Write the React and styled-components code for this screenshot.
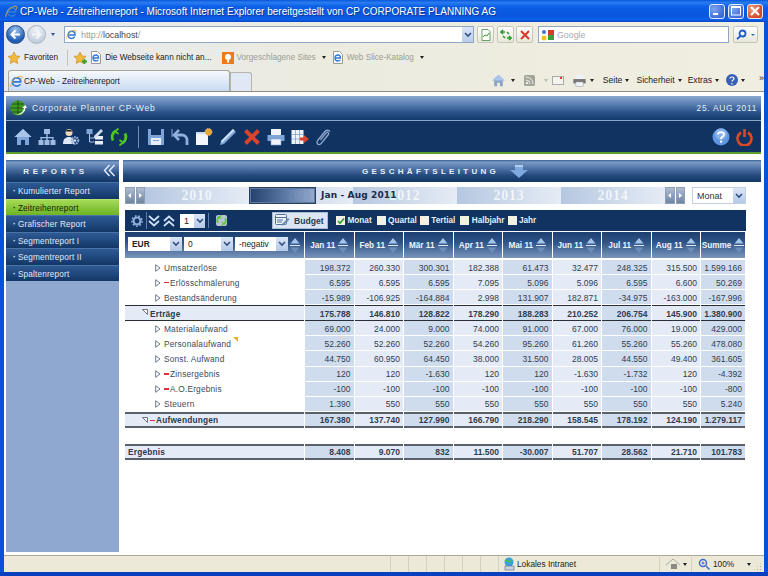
import React from "react";
import styled, { createGlobalStyle } from "styled-components";

const Global = createGlobalStyle`
  html, body { margin: 0; padding: 0; overflow: hidden; background: #fff; }
  * { box-sizing: border-box; }
  body { font-family: "Liberation Sans", Arial, sans-serif; }
`;

const Win = styled.div`
  width: 768px; height: 576px; display: flex; flex-direction: column; overflow: hidden;
  background: #0a50d8;
`;
const TitleBar = styled.div`
  height: 22px; flex: none; display: flex; align-items: center; padding: 0 5px 0 5px; gap: 2px;
  background: linear-gradient(180deg, #0a58dc 0%, #2a7cf0 12%, #0b5fe6 30%, #0a56dc 70%, #0c60ea 88%, #0648c8 100%);
`;
const TitleText = styled.div`
  flex: 1; color: #fff; font-size: 10px; white-space: nowrap; text-shadow: 1px 1px 0 #0a3a9a; letter-spacing: 0.02px;
`;
const WinBtn = styled.div`
  width: 16px; height: 15px; border: 1px solid #e4ecfb; border-radius: 3px; margin-left: 1px;
  display: flex; align-items: center; justify-content: center;
  background: ${p => p.$close ? "radial-gradient(circle at 30% 30%, #f0a080, #d2492a 70%)" : "radial-gradient(circle at 30% 30%, #7ea5f0, #3a68d8 75%)"};
`;
const Chrome = styled.div`
  flex: none; margin: 0 4px; background: linear-gradient(90deg, #e6ebf2 0%, #ecebe0 40%, #f0eee0 100%);
  border-bottom: 1px solid #8f8d80;
`;
const AddressRow = styled.div`
  height: 25px; display: flex; align-items: center; padding-left: 2px;
`;
const NavBtn = styled.div`
  width: 19px; height: 19px; border-radius: 50%; display: flex; align-items: center; justify-content: center;
  margin-right: 2px; border: 1px solid ${p => p.$off ? "#a9b6c6" : "#1c4c94"};
  background: ${p => p.$off ? "radial-gradient(circle at 50% 25%, #eef2f7, #b6c3d4)" : "radial-gradient(circle at 50% 25%, #9fc4ee, #1f5cb0 70%)"};
`;
const Caret = styled.span`
  display: inline-block; flex: none; width: 0; height: 0; border-left: ${p => p.$s || 2.5}px solid transparent; border-right: ${p => p.$s || 2.5}px solid transparent;
  border-top: ${p => p.$s || 3}px solid ${p => p.$c || "#222"}; margin-left: ${p => p.$ml ?? 3}px;
`;
const AddressField = styled.div`
  width: 410px; height: 17px; margin-left: 9px; background: #fff; border: 1px solid #8fa7c2; display: flex; align-items: center;
  padding-left: 1px; gap: 4px; font-size: 8.8px; color: #9a9a9a;
  b { font-weight: 400; color: #444; }
`;
const ComboBtn = styled.div`
  margin-left: auto; width: 11px; height: 15px; background: linear-gradient(#dbe6f6, #b9cdea); display: flex; align-items: center; justify-content: center;
`;
const SmallBtn = styled.div`
  width: 17px; height: 17px; margin-left: ${p => p.$ml}px; border: 1px solid #c6c6bc; border-radius: 2px; background: linear-gradient(#fff, #e8e7da);
  display: flex; align-items: center; justify-content: center;
`;
const SearchField = styled(AddressField)`
  width: 191px; margin-left: 5px; gap: 2px; color: #aaa; padding-left: 2px;
`;
const SearchBtn = styled.div`
  width: 25px; height: 17px; margin-left: 4px; border: 1px solid #c6c6bc; border-radius: 2px; background: linear-gradient(#fff, #e6e6da); display: flex; align-items: center; padding-left: 2px;
`;
const FavRow = styled.div`
  height: 21px; display: flex; align-items: center; font-size: 8.2px; color: #222; padding-left: 3px; white-space: nowrap;
`;
const FavItem = styled.div`
  display: flex; align-items: center; gap: 3px; margin-left: ${p => p.$ml || 0}px; color: ${p => p.$dim ? "#9c9c92" : "#222"};
`;
const VSep = styled.div`
  width: 1px; height: ${p => p.$h || 16}px; background: ${p => p.$c || "#c4c2b2"}; margin-left: ${p => p.$ml || 0}px; flex: none;
`;
const TabRow = styled.div`
  height: 23px; display: flex; align-items: flex-end; font-size: 8.2px; color: #222; padding-left: 4px; white-space: nowrap;
`;
const Tab = styled.div`
  width: 222px; height: 21px; border: 1px solid #a7a79c; border-bottom: none; border-radius: 3px 3px 0 0; display: flex; align-items: center; gap: 1px; padding-left: 1px;
  background: linear-gradient(#f6f9fd, #c9daf2);
`;
const NewTab = styled.div`
  width: 22px; height: 19px; border: 1px solid #b6b6ac; border-bottom: none; border-radius: 0 3px 0 0; background: #dfe8f4;
`;
const CmdBar = styled.div`
  display: flex; align-items: center; align-self: center; margin-left: auto; padding-top: 1px;
`;
const CmdText = styled.span`
  margin-left: ${p => p.$ml}px; display: inline-flex; align-items: center; font-size: 8.6px; color: #222;
`;
const CmdIcon = styled.span`
  display: inline-flex; margin-left: ${p => p.$ml}px;
`;
const More = styled.span`
  font-size: 9px; margin-left: 14px; align-self: flex-start; line-height: 8px;
`;
const Page = styled.div`
  flex: 1; margin: 0 4px; background: #fff; padding: 4px 3px 3px 2px; display: flex; flex-direction: column; min-height: 0;
`;
const gradient = "linear-gradient(180deg, #8ba8d0 0%, #5f83b4 30%, #2a5288 70%, #133a6c 100%)";
const AppHeader = styled.div`
  height: 25px; flex: none; display: flex; align-items: center; padding: 0 4px 0 4px; background: ${gradient};
  color: #e6edf7; font-size: 8px; border-bottom: 1px solid #8aa6cc;
`;
const AppTitle = styled.span`
  margin-left: 5px; letter-spacing: 0.78px; font-size: 8.6px; flex: 1;
`;
const AppDate = styled.span`
  letter-spacing: 0.7px; font-size: 8.4px;
`;
const MainToolbar = styled.div`
  height: 33px; flex: none; display: flex; align-items: center; gap: 6px; padding: 0 8px; background: #103362; border-bottom: 2px solid #5aa02a;
`;
const ToolSep = styled.div`
  width: 1px; height: 22px; background: #6f8fb8; margin: 0 2px 0 4px;
`;
const Spacer = styled.div`flex: 1;`;
const Body = styled.div`
  flex: 1; display: flex; gap: 4px; margin-top: 6px; min-height: 0;
`;
const Sidebar = styled.div`
  width: 113px; flex: none; background: #8ea8cf; display: flex; flex-direction: column;
`;
const PanelHead = styled.div`
  height: 22px; flex: none; display: flex; align-items: center; justify-content: center; position: relative; color: #e8eef8; font-weight: 700;
  font-size: 8px; letter-spacing: 3.7px; padding-right: 14px;
  background: linear-gradient(180deg, #3c6398 0%, #7c9ac4 10%, #5a7fb0 30%, #24497c 70%, #123766 100%);
`;
const Collapse = styled.div`
  position: absolute; right: 3px; top: 4px; display: flex;
`;
const SideItem = styled.div`
  height: 16.5px; display: flex; align-items: center; padding: 2px 0 0 7px; font-size: 8.2px; letter-spacing: 0.18px; white-space: nowrap;
  color: ${p => p.$on ? "#10240a" : "#e2eaf6"};
  border-top: 1px solid ${p => p.$on ? "#b6e070" : "#4b73a8"};
  background: ${p => p.$on ? "linear-gradient(180deg, #a6da56, #6db424)" : "linear-gradient(180deg, #2e5a94, #123766)"};
  &::before { content: "·"; margin-right: 2px; font-weight: 700; }
`;
const Main = styled.div`
  flex: 1; min-width: 0; display: flex; flex-direction: column;
`;
const MainHead = styled(PanelHead)`
  letter-spacing: 3.3px; gap: 11px; padding: 0 0 0 6px;
`;
const Content = styled.div`
  flex: 1; padding: 5px 15px 0 2px; background: #fff;
`;
const Timeline = styled.div`
  display: flex; height: 17px; position: relative; width: 621px;
`;
const TimeBtns = styled.div`
  width: 20px; flex: none; display: flex; gap: 1px;
`;
const TimeBtn = styled.div`
  flex: 1; background: linear-gradient(#aebcd0, #71859f); border: 1px solid #8d9fb8; display: flex; align-items: center; justify-content: center;
`;
const Year = styled.div`
  width: 104px; flex: none; display: flex; align-items: center; justify-content: center; font-family: "Liberation Serif", serif; font-weight: 700; font-size: 14px; letter-spacing: 0.8px;
  color: rgba(255,255,255,0.72); background: linear-gradient(90deg, #b5c7e0, #e6ecf5);
`;
const Range = styled.div`
  position: absolute; left: 124px; top: 0; width: 67px; height: 17px; border: 1px solid #2a3f5c;
  background: linear-gradient(90deg, #25416d, rgba(80,112,160,0.85) 60%, rgba(130,155,195,0.8));
  box-shadow: inset 0 0 0 1px #5d7aa6;
`;
const RangeLabel = styled.div`
  position: absolute; left: 196px; top: 1px; font-family: "DejaVu Sans", sans-serif; font-weight: 700; font-size: 9px; color: #1c2c4a; line-height: 15px; white-space: nowrap; letter-spacing: 0.13px;
`;
const TopSelect = styled.div`
  position: absolute; left: 567px; top: 0; width: 54px; height: 17px; background: #fff; border: 1px solid #c3d0e4; display: flex; align-items: center; padding-left: 4px; font-size: 9px; color: #333;
`;
const SelBtn = styled.div`
  margin-left: auto; width: ${p => p.$w || 12}px; height: 100%; background: linear-gradient(#dbe6f6, #b4c9e8); display: flex; align-items: center; justify-content: center;
`;
const Chev = () => <svg width="8" height="6" viewBox="0 0 8 6"><path d="M1 1l3 3 3-3" fill="none" stroke="#33507e" strokeWidth="1.6" /></svg>;
const GridBar = styled.div`
  margin-top: 6px; height: 21px; background: #103362; display: flex; align-items: center; position: relative; font-size: 8.2px; color: #e6edf7; font-weight: 700; width: 621px;
`;
const BarIcon = styled.span`
  display: flex; margin-left: ${p => p.$ml}px; gap: ${p => p.$gap || 0}px;
`;
const BarBadge = styled(BarIcon)`
  background: #b8c4d4; border-radius: 2px;
`;
const NumSelect = styled.div`
  width: 25px; height: 14px; background: #fff; display: flex; align-items: center; padding-left: 4px; font-size: 9px; color: #222; margin-left: ${p => p.$ml || 0}px; font-weight: 400;
`;
const BudgetBtn = styled.div`
  width: 56px; height: 17px; margin-left: ${p => p.$ml}px; background: #dbe5f3; border: 1px solid #a8bbd6; display: flex; align-items: center; gap: 4px; padding-left: 2px; color: #2a3a52; font-size: 8.6px;
`;
const Check = styled.label`
  display: flex; align-items: center; gap: 2.5px; margin-left: ${p => p.$ml || 0}px;
`;
const CheckBox = styled.span`
  width: 9px; height: 9px; background: #f2f1e6; display: flex; align-items: center; justify-content: center; flex: none;
`;
const Table = styled.div`width: 621px;`;
const Row = styled.div`
  display: grid; grid-template-columns: 179px repeat(8, 48.5px) 44px; column-gap: 1px;
  height: ${p => p.$h || 15.1}px; margin-top: ${p => p.$mt || 0}px; margin-bottom: ${p => p.$mb || 0}px;
`;
const HeadLeft = styled.div`
  background: linear-gradient(180deg, #1c3f70 0%, #2f5488 40%, #7a95ba 100%); display: flex; align-items: flex-start; padding: 5px 0 0 3px; gap: 2px;
`;
const HeadCell = styled.div`
  display: flex; align-items: center; justify-content: center; gap: 3px; padding: 0 1px; color: #eef3fa; font-weight: 700; font-size: 8.2px; white-space: nowrap;
  background: linear-gradient(180deg, #1c3f70 0%, #2f5488 40%, #7a95ba 100%);
`;
const HSelect = styled.div`
  width: ${p => p.$w}px; height: 14px; background: #fff; display: flex; align-items: center; padding-left: 4px; font-size: 8.4px; color: #222; font-weight: ${p => p.$b ? 700 : 400};
`;
const Label = styled.div`
  display: flex; align-items: center; font-size: 8.3px; letter-spacing: 0.2px; color: ${p => p.$bold ? "#2c3a4c" : "#3c495c"}; font-weight: ${p => p.$bold ? 700 : 400};
  padding: 1px 0 0 ${p => p.$indent}px; white-space: nowrap; position: relative; margin-bottom: 1px;
  background: ${p => p.$bold ? "#e4ebf6" : "transparent"};
  ${p => p.$line ? `border-top: ${p.$line}; border-bottom: ${p.$line}; margin-bottom: 0;` : ""}
`;
const Cell = styled.div`
  display: flex; align-items: center; justify-content: flex-end; padding: 1px 3px 0 0; font-size: 8.5px; color: #323d4c; font-weight: ${p => p.$bold ? 700 : 400};
  background: ${p => p.$dark ? "#cfdcee" : "#e4ebf6"}; margin-bottom: 1px; white-space: nowrap;
  ${p => p.$line ? `border-top: ${p.$line}; border-bottom: ${p.$line}; margin-bottom: 0;` : ""}
`;
const Dash = styled.span`
  display: inline-block; width: 5px; height: 1.5px; background: #e0303a; margin-right: 1px; flex: none;
`;
const Note = styled.span`
  position: absolute; left: 108px; top: 1px; width: 0; height: 0; border-top: 5px solid #e6b030; border-left: 5px solid transparent;
`;
const StatusBar = styled.div`
  height: 17px; flex: none; margin: 0 4px; background: #ece9d8; border-top: 1px solid #aca899; display: flex; align-items: center; font-size: 8.3px; color: #222; position: relative;
`;
const StatusCell = styled.div`
  width: ${p => p.$w}px; height: 100%; border-right: 1px solid #d4d1c0; flex: none;
`;
const ZoneLabel = styled.span`
  margin-left: 1px; width: 142px; flex: none;
`;
const ZoomValue = styled.span`
  margin-left: 3px;
`;
const Grip = styled.div`
  position: absolute; right: 2px; bottom: 1px; width: 9px; height: 9px;
  background: radial-gradient(circle, #a5a294 0.8px, transparent 1px) 0 0 / 3px 3px;
  clip-path: polygon(100% 0, 100% 100%, 0 100%);
`;
const BottomEdge = styled.div`height: 4px; flex: none; background: #0a3fc0;`;

const IE = ({ s = 12 }) => (
  <svg width={s} height={s} viewBox="0 0 14 14"><path d="M3 7.5h8.5C11.5 4.5 9.5 3 7.2 3 4.6 3 2.6 5 2.6 7.5S4.7 12 7.2 12c1.8 0 3.2-.8 4-2.2" fill="none" stroke="#2f7ad8" strokeWidth="1.9" /><path d="M1 13C.2 11 3 4 9 1.8c2-.7 4-.6 4 .7 0 .8-.6 1.8-1.2 2.6" fill="none" stroke="#e9a93a" strokeWidth="1" /></svg>
);
const PageIE = () => (
  <svg width="12" height="13" viewBox="0 0 12 13"><path d="M1.5.5h6l3 3v9h-9z" fill="#fff" stroke="#9a9a90" /><path d="M3.5 7h5C8.5 5 7.5 4 6 4S3 5.2 3 7s1.3 3 3 3c1 0 2-.5 2.4-1.3" fill="none" stroke="#2f7ad8" strokeWidth="1.3" /></svg>
);
const Star = ({ plus }) => (
  <svg width="14" height="14" viewBox="0 0 14 14"><path d="M7 1l1.8 3.9 4.2.5-3.1 2.9.8 4.2L7 10.4 3.3 12.5l.8-4.2L1 5.4l4.2-.5z" fill="#f2bb3a" stroke="#c88a1a" strokeWidth=".7" />{plus && <path d="M9 10.5h5M11.5 8v5" stroke="#3aa030" strokeWidth="1.8" />}</svg>
);
const Arrow = ({ flip, c = "#fff" }) => (
  <svg width="11" height="11" viewBox="0 0 11 11" style={{ transform: flip ? "scaleX(-1)" : "none" }}><path d="M5.5 1.5L1.5 5.5l4 4M2 5.5h8" fill="none" stroke={c} strokeWidth="2" /></svg>
);
const Home = ({ s = 18, c = "#7ea4d8" }) => (
  <svg width={s} height={s} viewBox="0 0 18 18"><path d="M9 1L0.5 9h2.5v8h4v-5h4v5h4V9h2.500z" fill={c} /><path d="M9 1L0.5 9h17z" fill="#a9c6ea" /></svg>
);
const Net = () => (
  <svg width="18" height="18" viewBox="0 0 18 18" fill="#9dbbe2"><rect x="6" y="1" width="6" height="5" /><rect x="8.300" y="6" width="1.400" height="4" /><rect x="2.500" y="9" width="13" height="1.300" /><rect x="2.500" y="9" width="1.300" height="3" /><rect x="14.200" y="9" width="1.300" height="3" /><rect x="8.300" y="9" width="1.400" height="3" /><rect x="0.500" y="12" width="5" height="5" /><rect x="6.500" y="12" width="5" height="5" /><rect x="12.500" y="12" width="5" height="5" /></svg>
);
const UserGear = () => (
  <svg width="18" height="18" viewBox="0 0 18 18"><circle cx="7" cy="4.500" r="3.500" fill="#f3d9b8" /><path d="M3.500 3.500C4 1 10 1 10.500 3.500z" fill="#222" /><path d="M1 16c0-5 2.500-7 6-7s5 2 5 7z" fill="#dfe8f4" /><circle cx="13" cy="12.500" r="3.200" fill="none" stroke="#8fb0dc" strokeWidth="2.200" strokeDasharray="1.600 .7" /><circle cx="13" cy="12.500" r="1.200" fill="#e8eef7" /></svg>
);
const TreeEdit = () => (
  <svg width="18" height="18" viewBox="0 0 18 18"><rect x="0.500" y="1" width="6" height="5" fill="#7ea4d8" /><path d="M3.500 6v8h5M3.500 10h5" stroke="#a9c6ea" fill="none" /><rect x="9" y="8" width="8" height="3.500" fill="#e8eef7" /><rect x="9" y="13" width="8" height="3.500" fill="#e8eef7" /><path d="M8 8l7-7 2 2-7 7H8z" fill="#cfdcee" /></svg>
);
const Refresh = ({ s = 18 }) => (
  <svg width={s} height={s} viewBox="0 0 18 18" fill="none" stroke="#4fc81e" strokeWidth="2.800"><path d="M3 12.500A7 7 0 0 1 5.500 3" /><path d="M15 5.500A7 7 0 0 1 12.500 15" /><path d="M8.500 0.500L5 3.500l3.500 2.500M9.500 17.500l3.500-3-3.500-2.500" strokeWidth="1.800" /></svg>
);
const Save = () => (
  <svg width="18" height="18" viewBox="0 0 18 18"><path d="M1 1h16v16H1z" fill="#7ea4d8" /><rect x="4" y="1" width="10" height="6" fill="#103362" /><rect x="4" y="10" width="10" height="7" fill="#e8eef7" /><rect x="6" y="12" width="6" height="1" fill="#7ea4d8" /></svg>
);
const Undo = () => (
  <svg width="18" height="18" viewBox="0 0 18 18" fill="none" stroke="#8fb0dc"><path d="M1 1v8" strokeWidth="1" /><path d="M3 7h8a5 5 0 0 1 5 5v5" strokeWidth="2.800" /><path d="M8 2L3 7l5 5" strokeWidth="2.600" /></svg>
);
const NewDoc = () => (
  <svg width="18" height="18" viewBox="0 0 18 18"><path d="M1 4h12v13H1z" fill="#f3f6fb" /><path d="M1 4h12v2H1z" fill="#cfdcee" /><circle cx="13.500" cy="4" r="3.400" fill="#e6a43a" stroke="#f6d88a" strokeDasharray="1 1" /></svg>
);
const Pencil = () => (
  <svg width="18" height="18" viewBox="0 0 18 18"><path d="M14 1l3 3L5 16l-4 1 1-4z" fill="#7ea4d8" /><path d="M14 1l1.500 1.500L3 15l-1-2z" fill="#cfe0f4" /></svg>
);
const RedX = () => (
  <svg width="18" height="18" viewBox="0 0 18 18"><path d="M2.500 2.500l13 13M15.500 2.500l-13 13" stroke="#d8452e" strokeWidth="4" /></svg>
);
const Printer = ({ s = 18, c = "#cfdcee" }) => (
  <svg width={s} height={s} viewBox="0 0 18 18"><rect x="4" y="1" width="10" height="6" fill="#f0f4fa" /><rect x="0.500" y="7" width="17" height="6" fill={c === "#cfdcee" ? "#7ea4d8" : "#777"} /><rect x="4" y="11" width="10" height="6" fill="#f0f4fa" stroke={c === "#cfdcee" ? "#7ea4d8" : "#888"} strokeWidth=".6" /></svg>
);
const TableExport = () => (
  <svg width="18" height="18" viewBox="0 0 18 18"><rect x="0.500" y="2" width="12" height="14" fill="#f0f4fa" /><path d="M0.500 6.500h12M0.500 11h12M4.500 2v14M8.500 2v14" stroke="#7ea4d8" strokeWidth=".8" /><path d="M9 9.500h4V7l5 4-5 4v-2.500H9z" fill="#d8452e" /></svg>
);
const Clip = () => (
  <svg width="18" height="18" viewBox="0 0 18 18" fill="none" stroke="#8fa9d0" strokeWidth="1.300"><path d="M15 3.500c-1.500-2-4-1.500-5.500.500L3 12c-1.500 2-1 3.500 0 4.200s2.500.300 3.500-1L13 7c1-1.300.500-2.200 0-2.600s-1.300-.200-2 .7L5.500 12" /></svg>
);
const Help = () => (
  <svg width="18" height="18" viewBox="0 0 18 18"><circle cx="9" cy="9" r="8.500" fill="#5f97df" /><circle cx="9" cy="6" r="6" fill="#9cc3f0" opacity=".6" /><path d="M6 6.500C6 3.500 12 3.500 12 6.500c0 2-3 2-3 4.500" fill="none" stroke="#fff" strokeWidth="2" /><rect x="8" y="12.500" width="2.200" height="2.200" fill="#fff" /></svg>
);
const Power = () => (
  <svg width="17" height="18" viewBox="0 0 17 18" fill="none" stroke="#dc4a24" strokeWidth="2.600"><path d="M5 4.500a7 7 0 1 0 7 0" /><path d="M8.500 1v8" /></svg>
);
const Gear = ({ c = "#8fb0dc" }) => (
  <svg width="12" height="12" viewBox="0 0 12 12"><circle cx="6" cy="6" r="3.500" fill="none" stroke={c} strokeWidth="2.200" /><circle cx="6" cy="6" r="5.200" fill="none" stroke={c} strokeWidth="1.400" strokeDasharray="1.800 1.800" /></svg>
);
const DoubleChev = ({ up }) => (
  <svg width="12" height="12" viewBox="0 0 12 12" fill="none" stroke="#cfe0f4" strokeWidth="1.700" style={{ transform: up ? "scaleY(-1)" : "none" }}><path d="M1 1l5 4.500L11 1M1 6l5 4.500L11 6" /></svg>
);
const SortArrows = () => (
  <svg width="10" height="17" viewBox="0 0 10 17" style={{ flex: "none" }}><path d="M5 1l4.500 5.500H.5z" fill="#a6c4ea" /><rect y="8" width="10" height="1" fill="#dce8f7" /><path d="M5 16l4.500-5.500H.5z" fill="#6b8dbb" /></svg>
);
const TriOpen = () => (
  <svg width="6" height="8" viewBox="0 0 6 8" style={{ flex: "none", marginRight: 3 }}><path d="M.7.7l4.300 3.300L.7 7.300z" fill="#fff" stroke="#6e7a8a" /></svg>
);
const TriClosed = () => (
  <svg width="6" height="6" viewBox="0 0 6 6" style={{ flex: "none", marginRight: 2, alignSelf: "flex-start", marginTop: 2 }}><path d="M.5.500h5v5z" fill="#fff" stroke="#556" strokeWidth=".8" /></svg>
);

const months = ["Jan 11", "Feb 11", "Mär 11", "Apr 11", "Mai 11", "Jun 11", "Jul 11", "Aug 11", "Summe"];
const rows = [
  { n: "Umsatzerlöse", v: ["198.372", "260.330", "300.301", "182.388", "61.473", "32.477", "248.325", "315.500", "1.599.166"] },
  { n: "Erlösschmälerung", neg: 1, v: ["6.595", "6.595", "6.595", "7.095", "5.096", "5.096", "6.595", "6.600", "50.269"] },
  { n: "Bestandsänderung", v: ["-15.989", "-106.925", "-164.884", "2.998", "131.907", "182.871", "-34.975", "-163.000", "-167.996"] },
  { n: "Erträge", sum: 1, line: "1px solid #2a2e36", v: ["175.788", "146.810", "128.822", "178.290", "188.283", "210.252", "206.754", "145.900", "1.380.900"] },
  { n: "Materialaufwand", v: ["69.000", "24.000", "9.000", "74.000", "91.000", "67.000", "76.000", "19.000", "429.000"] },
  { n: "Personalaufwand", note: 1, v: ["52.260", "52.260", "52.260", "54.260", "95.260", "61.260", "55.260", "55.260", "478.080"] },
  { n: "Sonst. Aufwand", v: ["44.750", "60.950", "64.450", "38.000", "31.500", "28.005", "44.550", "49.400", "361.605"] },
  { n: "Zinsergebnis", neg: 1, v: ["120", "120", "-1.630", "120", "120", "-1.630", "-1.732", "120", "-4.392"] },
  { n: "A.O.Ergebnis", neg: 1, v: ["-100", "-100", "-100", "-100", "-100", "-100", "-100", "-100", "-800"] },
  { n: "Steuern", v: ["1.390", "550", "550", "550", "550", "550", "550", "550", "5.240"] },
  { n: "Aufwendungen", sum: 1, neg: 1, line: "2px solid #5a6068", v: ["167.380", "137.740", "127.990", "166.790", "218.290", "158.545", "178.192", "124.190", "1.279.117"] },
  { n: "Ergebnis", sum: 2, mt: 16, line: "2px solid #5a6068", v: ["8.408", "9.070", "832", "11.500", "-30.007", "51.707", "28.562", "21.710", "101.783"] },
];
const reports = ["Kumulierter Report", "Zeitreihenreport", "Grafischer Report", "Segmentreport I", "Segmentreport II", "Spaltenreport"];

function CheckItem({ label, on, ml }) {
  return (
    <Check $ml={ml}>
      <CheckBox>{on && <svg width="8" height="8" viewBox="0 0 8 8"><path d="M1 4l2 2.300L7 1.500" fill="none" stroke="#2a9a2a" strokeWidth="1.600" /></svg>}</CheckBox>
      {label}
    </Check>
  );
}

export default function App() {
  return (
    <Win>
      <Global />
      <TitleBar>
        <IE s={13} />
        <TitleText>CP-Web - Zeitreihenreport - Microsoft Internet Explorer bereitgestellt von CP CORPORATE PLANNING AG</TitleText>
        <WinBtn><svg width="8" height="9"><rect y="6" width="5" height="2" fill="#fff" /></svg></WinBtn>
        <WinBtn><svg width="10" height="10"><rect x=".5" y="1" width="9" height="8" fill="none" stroke="#fff" /><rect width="10" height="2" fill="#fff" /></svg></WinBtn>
        <WinBtn $close><svg width="10" height="10"><path d="M1 1l8 8M9 1l-8 8" stroke="#fff" strokeWidth="2" /></svg></WinBtn>
      </TitleBar>
      <Chrome>
        <AddressRow>
          <NavBtn><Arrow /></NavBtn>
          <NavBtn $off><Arrow flip c="#f4f6fa" /></NavBtn>
          <Caret $c="#2a5a9a" $ml={3} />
          <AddressField><IE s={11} /><span>http://<b>localhost</b>/</span><ComboBtn><Chev /></ComboBtn></AddressField>
          <SmallBtn $ml={3}><svg width="12" height="12" viewBox="0 0 12 12"><path d="M2 .5h6l2 2v9H2z" fill="#fff" stroke="#6aa06a" /><path d="M3 8l2-2 2 1 2-3" stroke="#3aa030" fill="none" /></svg></SmallBtn>
          <SmallBtn $ml={3}><svg width="12" height="12" viewBox="0 0 12 12" fill="none" stroke="#2e9a2e" strokeWidth="1.600"><path d="M5 3H1M3 1L1 3l2 2M7 9h4M9 7l2 2-2 2M7 3l2 2M5 9L3 7" /></svg></SmallBtn>
          <SmallBtn $ml={2}><svg width="10" height="10" viewBox="0 0 10 10"><path d="M1 1l8 8M9 1l-8 8" stroke="#d83a2a" strokeWidth="2" /></svg></SmallBtn>
          <SearchField>
            <svg width="14" height="12" viewBox="0 0 14 12"><circle cx="3" cy="3" r="2" fill="#3a6fd8" /><circle cx="3" cy="9" r="2.500" fill="#f2c21a" /><rect x="7" y="1" width="6" height="5" fill="#d83a2a" /><rect x="7" y="6" width="6" height="5" fill="#3aa030" /></svg>
            <span>Google</span>
          </SearchField>
          <SearchBtn><svg width="11" height="11" viewBox="0 0 11 11" fill="none" stroke="#1e5cc8" strokeWidth="1.800"><circle cx="6.500" cy="4.500" r="3" /><path d="M4.500 7L1 10.200" /></svg><Caret $c="#3a6aa8" $ml={4} $s={2} /></SearchBtn>
        </AddressRow>
        <FavRow>
          <FavItem><Star /><span>Favoriten</span></FavItem>
          <VSep $ml={9} />
          <FavItem $ml={5}><Star plus /></FavItem>
          <FavItem $ml={3}><PageIE /><span>Die Webseite kann nicht an...</span></FavItem>
          <FavItem $ml={10} $dim>
            <svg width="12" height="12" viewBox="0 0 12 12"><rect width="12" height="12" fill="#ef7a1a" /><circle cx="6" cy="5" r="3" fill="#fff" /><rect x="5" y="8" width="2" height="2.500" fill="#fff" /></svg>
            <span>Vorgeschlagene Sites</span><Caret />
          </FavItem>
          <FavItem $ml={6} $dim><PageIE /><span>Web Slice-Katalog</span><Caret /></FavItem>
        </FavRow>
        <TabRow>
          <Tab><IE s={13} /><span>CP-Web - Zeitreihenreport</span></Tab>
          <NewTab />
          <CmdBar>
            <Home s={13} c="#8ba5c8" /><Caret $ml={6} />
            <CmdIcon $ml={9}><svg width="11" height="11"><rect width="11" height="11" rx="1.500" fill="#a5a59a" /><circle cx="3" cy="8" r="1.200" fill="#eee" /><path d="M2 5a4 4 0 0 1 4 4M2 2a7 7 0 0 1 7 7" stroke="#eee" fill="none" /></svg></CmdIcon>
            <Caret $c="#bbb" $ml={9} />
            <CmdIcon $ml={4}><svg width="12" height="9"><rect x=".5" y=".5" width="11" height="8" fill="#f4f4ee" stroke="#aaa" /><rect x="8" y="1" width="2" height="2" fill="#d84030" /></svg></CmdIcon>
            <CmdIcon $ml={9}><Printer s={13} c="#777" /></CmdIcon><Caret $ml={4} />
            <CmdText $ml={9}>Seite<Caret /></CmdText>
            <CmdText $ml={7}>Sicherheit<Caret /></CmdText>
            <CmdText $ml={6}>Extras<Caret /></CmdText>
            <CmdIcon $ml={7}><svg width="12" height="12" viewBox="0 0 12 12"><circle cx="6" cy="6" r="6" fill="#3a5fb8" /><path d="M4 4.500C4 2.500 8 2.500 8 4.500c0 1.500-2 1.500-2 3M6 9v1.500" fill="none" stroke="#fff" strokeWidth="1.200" /></svg></CmdIcon>
            <Caret $ml={3} />
            <More>»</More>
          </CmdBar>
        </TabRow>
      </Chrome>
      <Page>
        <AppHeader>
          <svg width="17" height="17" viewBox="0 0 17 17"><circle cx="8" cy="8" r="7.500" fill="#3f9a22" /><path d="M0.500 8h15M8 .5v15M2 4h12M2 12h12" stroke="#163c10" strokeWidth=".7" /><path d="M5 14c4 1 8-1 9-6l-2 0 3.200-3 1.800 3-1.500 0C15 13 10 16 5 14z" fill="#fff" /></svg>
          <AppTitle>Corporate Planner CP-Web</AppTitle>
          <AppDate>25. AUG 2011</AppDate>
        </AppHeader>
        <MainToolbar>
          <Home />
          <Net />
          <UserGear />
          <TreeEdit />
          <Refresh />
          <ToolSep />
          <Save />
          <Undo />
          <NewDoc />
          <Pencil />
          <RedX />
          <Printer />
          <TableExport />
          <Clip />
          <Spacer />
          <Help />
          <Power />
        </MainToolbar>
        <Body>
          <Sidebar>
            <PanelHead>
              REPORTS
              <Collapse><svg width="13" height="13" viewBox="0 0 13 13" fill="none" stroke="#e6eef9" strokeWidth="1.400"><path d="M6.500 1L1.500 6.500l5 5.500M11.500 1l-5 5.500 5 5.500" /></svg></Collapse>
            </PanelHead>
            {reports.map((r, i) => <SideItem key={r} $on={i === 1}>{r}</SideItem>)}
          </Sidebar>
          <Main>
            <MainHead>
              <span>GESCHÄFTSLEITUNG</span>
              <svg width="18" height="13" viewBox="0 0 18 13"><path d="M5 0h8v5h5l-9 8-9-8h5z" fill="#7ea8e0" /><path d="M5 0h8v2H5z" fill="#b4cdf0" /></svg>
            </MainHead>
            <Content>
              <Timeline>
                <TimeBtns>
                  <TimeBtn><svg width="3" height="5"><path d="M3 0v5L0 2.500z" fill="#fff" /></svg></TimeBtn>
                  <TimeBtn><svg width="3" height="5"><path d="M0 0v5l3-2.500z" fill="#fff" /></svg></TimeBtn>
                </TimeBtns>
                {["2010", "2011", "2012", "2013", "2014"].map(y => <Year key={y}>{y}</Year>)}
                <TimeBtns>
                  <TimeBtn><svg width="3" height="5"><path d="M3 0v5L0 2.500z" fill="#fff" /></svg></TimeBtn>
                  <TimeBtn><svg width="3" height="5"><path d="M0 0v5l3-2.500z" fill="#fff" /></svg></TimeBtn>
                </TimeBtns>
                <Range />
                <RangeLabel>Jan - Aug 2011</RangeLabel>
                <TopSelect>Monat<SelBtn><Chev /></SelBtn></TopSelect>
              </Timeline>
              <GridBar>
                <BarIcon $ml={6}><Gear /></BarIcon>
                <VSep $ml={3} $h={17} $c="#5f80aa" />
                <BarIcon $ml={1} $gap={3}><DoubleChev /><DoubleChev up /></BarIcon>
                <NumSelect $ml={5}>1<SelBtn $w={11}><Chev /></SelBtn></NumSelect>
                <VSep $ml={3} $h={15} $c="#5f80aa" />
                <BarBadge $ml={7}><Refresh s={11} /></BarBadge>
                <BudgetBtn $ml={45}>
                  <svg width="15" height="13" viewBox="0 0 15 13"><rect x=".5" y=".5" width="11" height="10" rx="1" fill="#f0f4fa" stroke="#50709c" /><path d="M1 3.500h10M2 6h6M2 8h5" stroke="#50709c" /><path d="M13 4l1.500 1.500L9 11l-2 .5.500-2z" fill="#6a8cbc" /></svg>
                  Budget
                </BudgetBtn>
                <CheckItem label="Monat" on ml={8} />
                <CheckItem label="Quartal" ml={5} />
                <CheckItem label="Tertial" ml={3} />
                <CheckItem label="Halbjahr" ml={5} />
                <CheckItem label="Jahr" ml={3} />
              </GridBar>
              <Table>
                <Row $h={26} $mt={1} $mb={2}>
                  <HeadLeft>
                    <HSelect $w={54} $b>EUR<SelBtn><Chev /></SelBtn></HSelect>
                    <HSelect $w={49}>0<SelBtn><Chev /></SelBtn></HSelect>
                    <HSelect $w={53}>-negativ<SelBtn><Chev /></SelBtn></HSelect>
                    <SortArrows />
                  </HeadLeft>
                  {months.map(m => <HeadCell key={m}>{m}<SortArrows /></HeadCell>)}
                </Row>
                {rows.map(r => {
                  const bold = !!r.sum;
                  const indent = r.sum === 2 ? 3 : r.sum ? 17 : 30;
                  return (
                    <Row key={r.n} $h={bold ? 16 : undefined} $mt={r.mt}>
                      <Label $bold={bold} $indent={indent} $line={r.line}>
                        {r.sum === 1 ? <TriClosed /> : r.sum === 2 ? null : <TriOpen />}
                        {r.neg && <Dash />}
                        {r.n}
                        {r.note && <Note />}
                      </Label>
                      {r.v.map((v, i) => <Cell key={i} $dark={i % 2 === 0} $bold={bold} $line={r.line}>{v}</Cell>)}
                    </Row>
                  );
                })}
              </Table>
            </Content>
          </Main>
        </Body>
      </Page>
      <StatusBar>
        <StatusCell $w={387} />
        {[18, 18, 18, 18, 18, 18].map((w, i) => <StatusCell key={i} $w={w} />)}
        <CmdIcon $ml={3}><svg width="14" height="14" viewBox="0 0 14 14"><circle cx="7" cy="5" r="4.500" fill="#3aa0e0" /><path d="M3 3l4 2 3-2" stroke="#4ac04a" fill="none" strokeWidth="1.500" /><rect x="3" y="9" width="9" height="4" fill="#c8d4e4" stroke="#667" strokeWidth=".6" /></svg></CmdIcon>
        <ZoneLabel>Lokales Intranet</ZoneLabel>
        <VSep $h={15} $c="#d4d1c0" />
        <CmdIcon $ml={6}><svg width="14" height="13" viewBox="0 0 14 13"><path d="M0 7l7-6 7 6" stroke="#aaa" fill="none" /><rect x="5" y="6" width="6" height="5" fill="#8a8a80" /></svg></CmdIcon>
        <Caret $ml={3} />
        <VSep $ml={4} $h={15} $c="#d4d1c0" />
        <CmdIcon $ml={6}><svg width="12" height="12" viewBox="0 0 12 12" fill="none" stroke="#3a6fd0" strokeWidth="1.500"><circle cx="5" cy="5" r="3.500" /><path d="M8 8l3.500 3.500" /><path d="M3.500 5h3M5 3.500v3" strokeWidth="1" /></svg></CmdIcon>
        <ZoomValue>100%</ZoomValue>
        <Caret $ml={13} />
        <Grip />
      </StatusBar>
      <BottomEdge />
    </Win>
  );
}
